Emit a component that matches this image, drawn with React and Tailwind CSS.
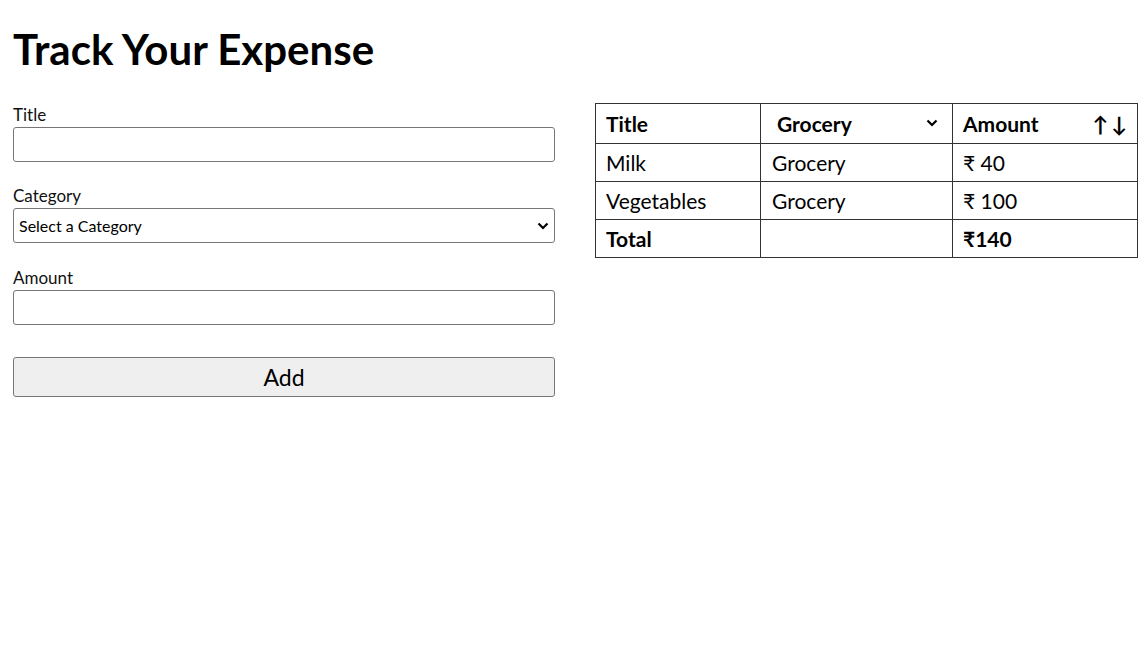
import React, { useState } from 'react';

const expenses = [
  { id: 1, title: 'Milk', category: 'Grocery', amount: 40 },
  { id: 2, title: 'Vegetables', category: 'Grocery', amount: 100 },
];

const Field = ({ label, children }) => (
  <div className="flex flex-col">
    <label className="text-[17px] leading-[24px] text-[#111]">{label}</label>
    {children}
  </div>
);

const Chevron = ({ className }) => (
  <svg className={className} width="12" height="12" viewBox="0 0 12 12">
    <path d="M1.5 3.5 L6 8 L10.5 3.5" fill="none" stroke="#000" strokeWidth="2.2" />
  </svg>
);

const App = () => {
  const [title, setTitle] = useState('');
  const [category, setCategory] = useState('');
  const [amount, setAmount] = useState('');

  const total = expenses.reduce((sum, e) => sum + e.amount, 0);

  return (
    <div className="min-h-screen bg-white pl-[13px] pr-[8px] pt-[24px] text-black" style={{ fontFamily: 'Lato, "Open Sans", sans-serif' }}>
      <h1 className="text-[42px] leading-[50px] font-bold">Track Your Expense</h1>

      <div className="mt-[29px] flex gap-[40px]">
        {/* Form */}
        <form className="flex w-[542px] shrink-0 flex-col" onSubmit={(e) => e.preventDefault()}>
          <Field label="Title">
            <input
              value={title}
              onChange={(e) => setTitle(e.target.value)}
              className="h-[35px] rounded-[3px] border border-[#767676] px-2 outline-none"
            />
          </Field>

          <div className="mt-[22px]">
            <Field label="Category">
              <div className="relative">
                <select
                  value={category}
                  onChange={(e) => setCategory(e.target.value)}
                  className="h-[35px] w-full appearance-none rounded-[3px] border border-[#767676] bg-white pl-[5px] text-[16px] outline-none"
                >
                  <option value="">Select a Category</option>
                  <option value="Grocery">Grocery</option>
                  <option value="Utilities">Utilities</option>
                  <option value="Entertainment">Entertainment</option>
                </select>
                <Chevron className="pointer-events-none absolute right-[6px] top-[12px]" />
              </div>
            </Field>
          </div>

          <div className="mt-[23px]">
            <Field label="Amount">
              <input
                value={amount}
                onChange={(e) => setAmount(e.target.value)}
                className="h-[35px] rounded-[3px] border border-[#767676] px-2 outline-none"
              />
            </Field>
          </div>

          <button className="mt-[32px] h-[40px] rounded-[3px] border border-[#767676] bg-[#efefef] text-[23px]">
            Add
          </button>
        </form>

        {/* Table */}
        <table className="h-fit w-[543px] shrink-0 border-collapse text-[21px]">
          <thead>
            <tr className="h-[40px]">
              <th className="w-[165px] border border-[#333] px-[10px] text-left font-bold">Title</th>
              <th className="w-[192px] border border-[#333] px-[10px] text-left font-bold">
                <div className="relative">
                  <select className="w-full appearance-none bg-transparent pl-[6px] font-bold outline-none">
                    <option>Grocery</option>
                    <option>Utilities</option>
                    <option>Entertainment</option>
                  </select>
                  <Chevron className="pointer-events-none absolute right-[4px] top-[9px]" />
                </div>
              </th>
              <th className="border border-[#333] px-[10px] text-left font-bold">
                <div className="flex items-center justify-between">
                  <span>Amount</span>
                  <span className="flex gap-[3px]">
                    <span>↑</span>
                    <span>↓</span>
                  </span>
                </div>
              </th>
            </tr>
          </thead>
          <tbody>
            {expenses.map((e) => (
              <tr key={e.id} className="h-[38px]">
                <td className="border border-[#333] px-[10px]">{e.title}</td>
                <td className="border border-[#333] px-[11px]">{e.category}</td>
                <td className="border border-[#333] px-[10px]">₹ {e.amount}</td>
              </tr>
            ))}
            <tr className="h-[38px]">
              <td className="border border-[#333] px-[10px] font-bold">Total</td>
              <td className="border border-[#333] px-[10px]"></td>
              <td className="border border-[#333] px-[10px] font-bold">₹{total}</td>
            </tr>
          </tbody>
        </table>
      </div>
    </div>
  );
};

export default App;
